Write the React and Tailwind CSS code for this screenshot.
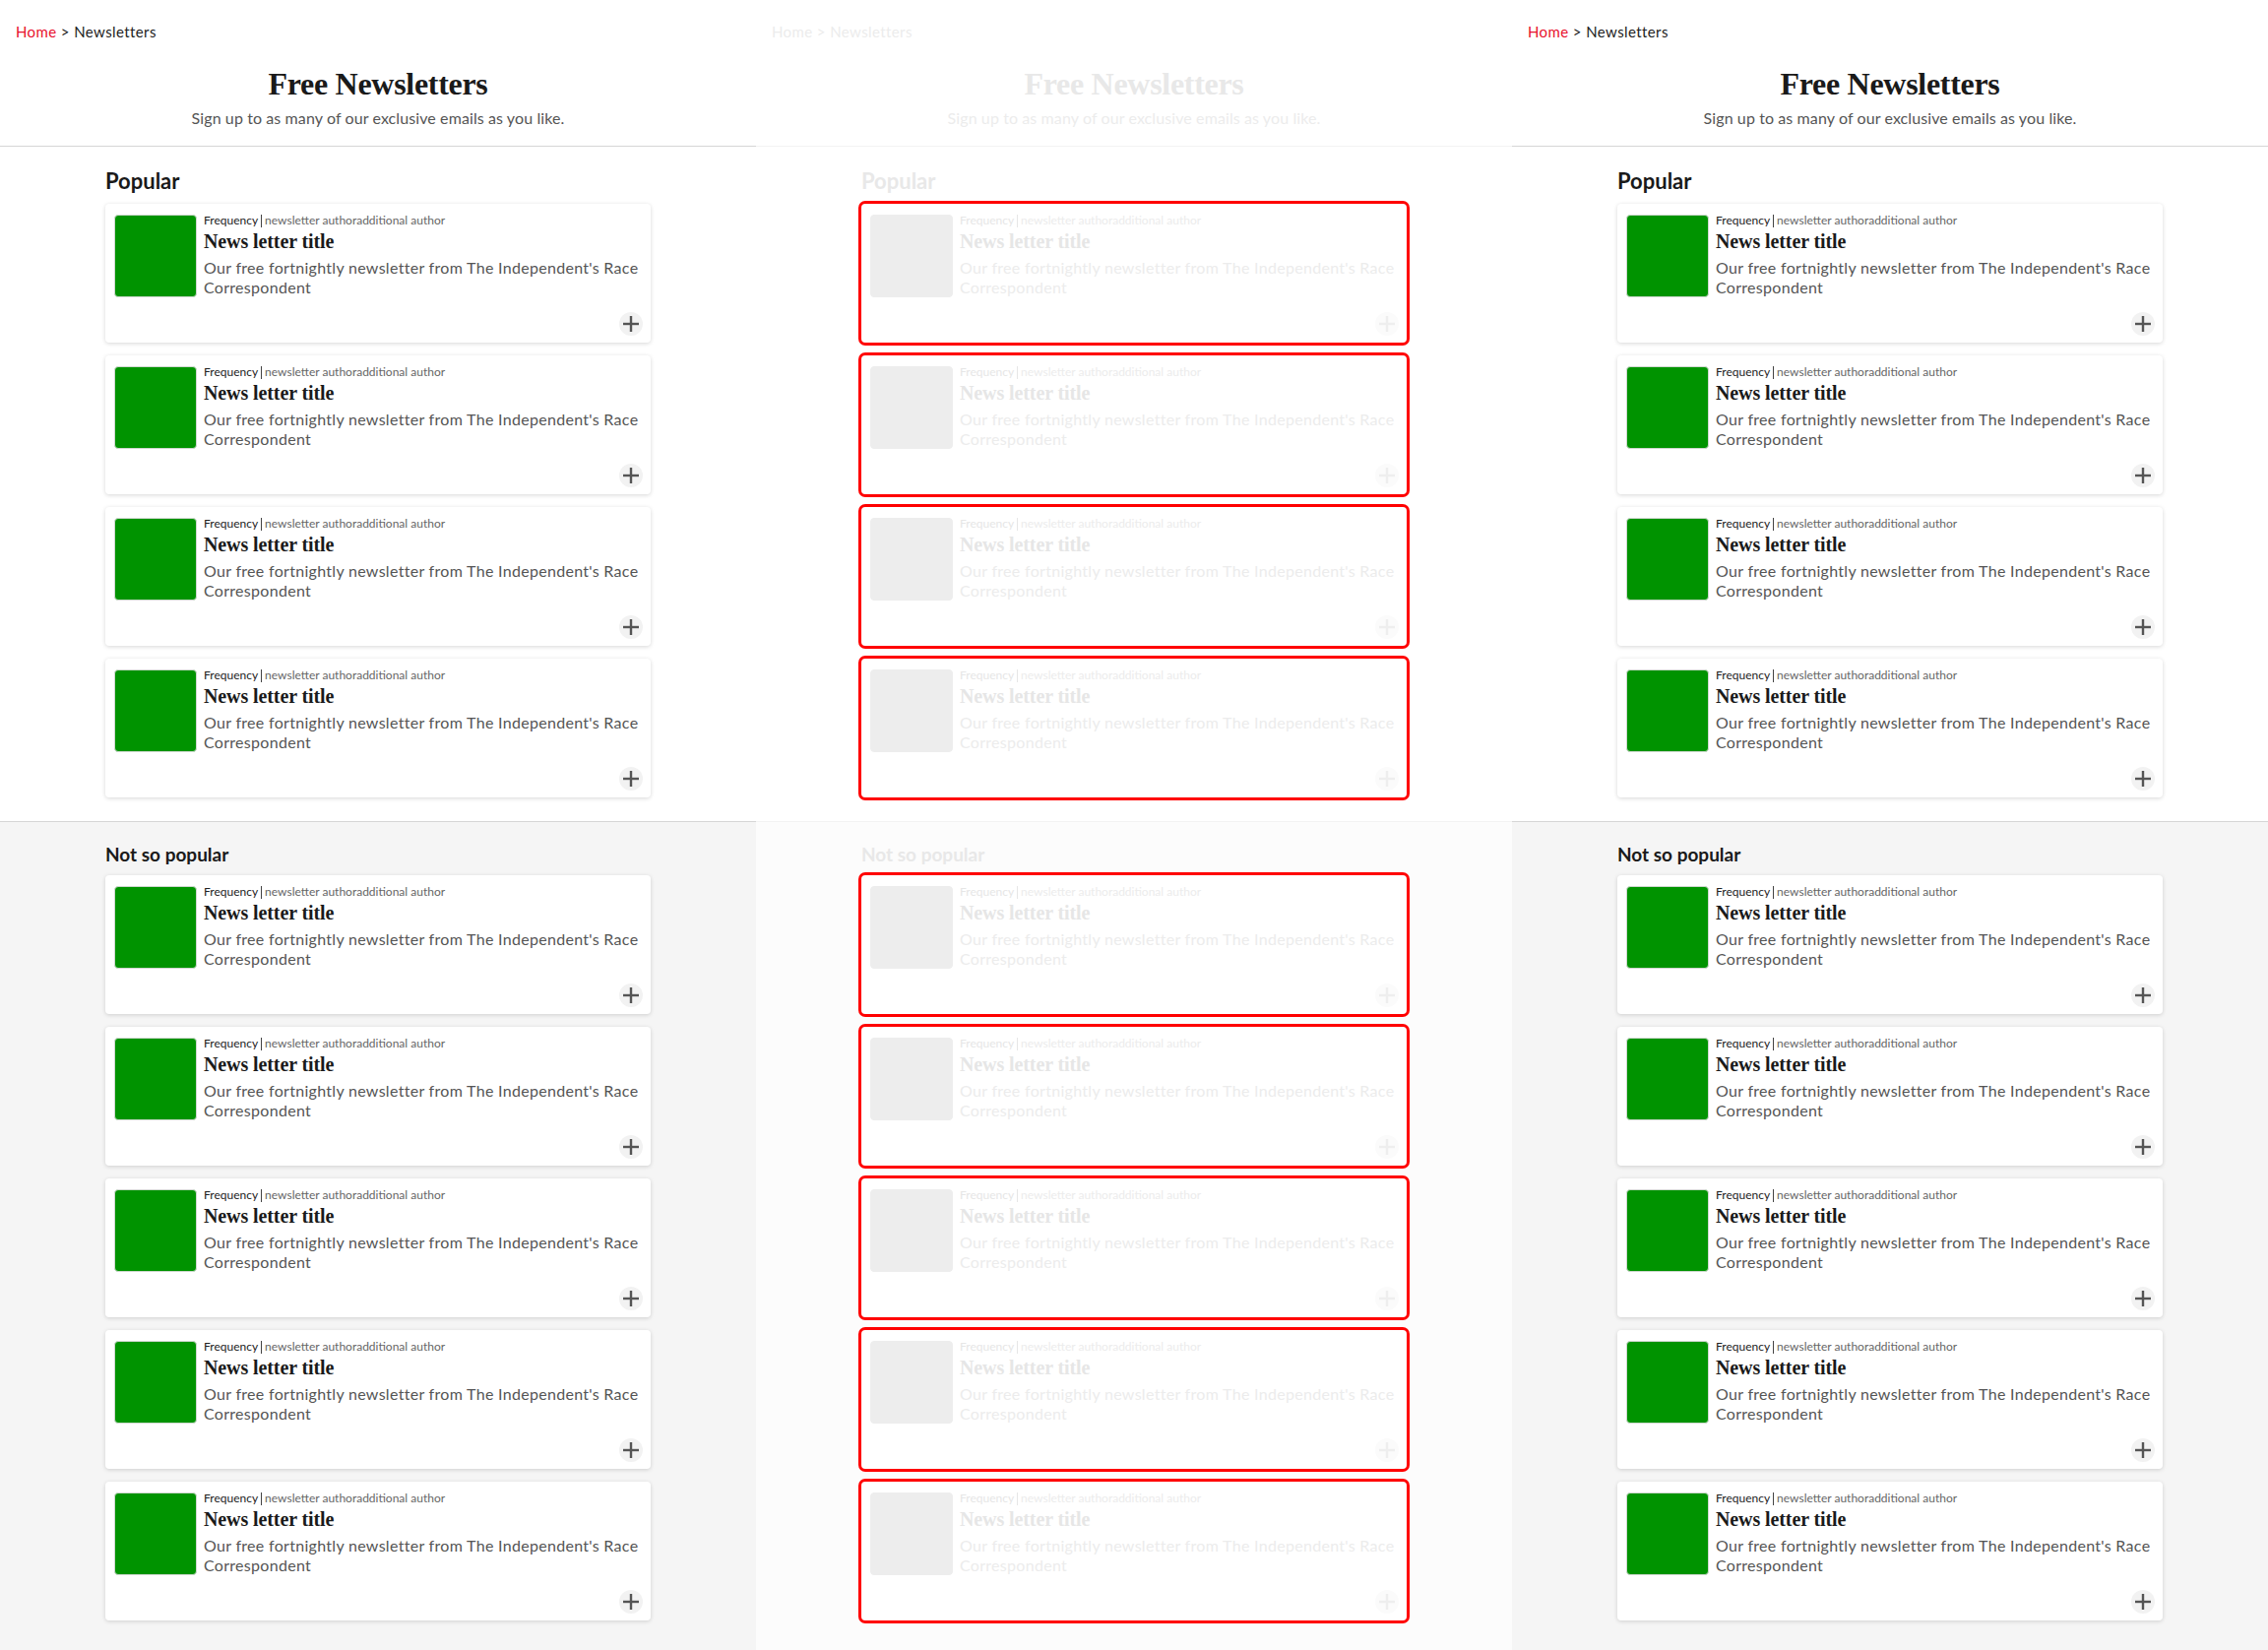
import React from "react";

function Plus({ faded }) {
  return (
    <div
      className={
        "w-[24px] h-[24px] rounded-full flex items-center justify-center " +
        (faded ? "bg-[#fbfbfb]" : "bg-[#f2f2f2]")
      }
    >
      <svg width="16" height="16" viewBox="0 0 16 16">
        <line x1="8" y1="0" x2="8" y2="16" stroke={faded ? "#eeeeee" : "#555555"} strokeWidth="2.4" />
        <line x1="0" y1="8" x2="16" y2="8" stroke={faded ? "#eeeeee" : "#555555"} strokeWidth="2.4" />
      </svg>
    </div>
  );
}

function Card({ faded }) {
  return (
    <div
      className={
        "bg-white rounded-[4px] pt-[9px] pl-[9px] pr-[8px] pb-[7px] " +
        (faded
          ? "ring-[3px] ring-[#ff0000]"
          : "shadow-[0_1px_4px_rgba(0,0,0,0.16)]")
      }
    >
      <div className="flex items-start gap-[7px]">
        <div
          className={
            "mt-[2px] w-[84px] h-[84px] shrink-0 rounded-[4px] border " +
            (faded ? "bg-[#ededed] border-[#ededed]" : "bg-[#009300] border-[#cfd8cf]")
          }
        />
        <div className="flex-1 min-w-0">
          <div className="text-[12px] leading-[16px] font-['Lato',sans-serif] flex items-center">
            <span className={faded ? "text-[#e6e6e6]" : "text-[#222222]"}>Frequency</span>
            <span className={"inline-block w-px h-[13px] mx-[3px] " + (faded ? "bg-[#e6e6e6]" : "bg-[#444444]")} />
            <span className={faded ? "text-[#ececec]" : "text-[#666666]"}>newsletter authoradditional author</span>
          </div>
          <div
            className={
              "mt-[1px] text-[20px] leading-[24px] font-bold font-['Liberation_Serif',serif] tracking-[-0.1px] " +
              (faded ? "text-[#e6e6e6]" : "text-[#1a1a1a]")
            }
          >
            News letter title
          </div>
          <div
            className={
              "mt-[5px] text-[16px] leading-[20px] font-['Lato',sans-serif] tracking-[0.3px] " +
              (faded ? "text-[#ececec]" : "text-[#555555]")
            }
          >
            Our free fortnightly newsletter from The Independent's Race Correspondent
          </div>
        </div>
      </div>
      <div className="mt-[15px] flex justify-end">
        <Plus faded={faded} />
      </div>
    </div>
  );
}

function Column({ faded }) {
  const popular = [0, 1, 2, 3];
  const notPopular = [0, 1, 2, 3, 4];
  return (
    <div className="w-[768px] min-h-[1676px] flex flex-col bg-white">
      <header className={"border-b " + (faded ? "border-[#f3f3f3]" : "border-[#d6d6d6]")}>
        <div className="pt-[22px] pl-[16px] text-[15px] leading-[20px] font-['Lato',sans-serif] tracking-[0.4px]">
          <span className={faded ? "text-[#ececec]" : "text-[#e8112d]"}>Home</span>
          <span className={faded ? "text-[#ececec]" : "text-[#222222]"}> &gt; Newsletters</span>
        </div>
        <h1
          className={
            "mt-[23px] text-center text-[32px] leading-[40px] font-bold font-['Liberation_Serif',serif] tracking-[-0.3px] " +
            (faded ? "text-[#e8e8e8]" : "text-[#1a1a1a]")
          }
        >
          Free Newsletters
        </h1>
        <p
          className={
            "mt-[5px] pb-[18px] text-center text-[16px] leading-[20px] font-['Lato',sans-serif] tracking-[0.1px] " +
            (faded ? "text-[#ececec]" : "text-[#555555]")
          }
        >
          Sign up to as many of our exclusive emails as you like.
        </p>
      </header>
      <section className={"border-b pt-[21px] pb-[24px] " + (faded ? "border-[#f3f3f3]" : "border-[#d6d6d6]")}>
        <div className="w-[554px] mx-auto">
          <h2
            className={
              "text-[22px] leading-[28px] font-bold font-['Lato',sans-serif] " +
              (faded ? "text-[#e8e8e8]" : "text-[#1a1a1a]")
            }
          >
            Popular
          </h2>
          <div className="mt-[9px] flex flex-col gap-[13px]">
            {popular.map((i) => (
              <Card key={i} faded={faded} />
            ))}
          </div>
        </div>
      </section>
      <section className={"flex-1 pt-[21px] pb-[29px] " + (faded ? "bg-[#fcfcfc]" : "bg-[#f5f5f5]")}>
        <div className="w-[554px] mx-auto">
          <h2
            className={
              "text-[19px] leading-[24px] font-bold font-['Lato',sans-serif] " +
              (faded ? "text-[#e8e8e8]" : "text-[#1a1a1a]")
            }
          >
            Not so popular
          </h2>
          <div className="mt-[9px] flex flex-col gap-[13px]">
            {notPopular.map((i) => (
              <Card key={i} faded={faded} />
            ))}
          </div>
        </div>
      </section>
    </div>
  );
}

export default function App() {
  return (
    <div className="w-[2304px] h-[1676px] overflow-hidden flex bg-white">
      <Column />
      <Column faded />
      <Column />
    </div>
  );
}
